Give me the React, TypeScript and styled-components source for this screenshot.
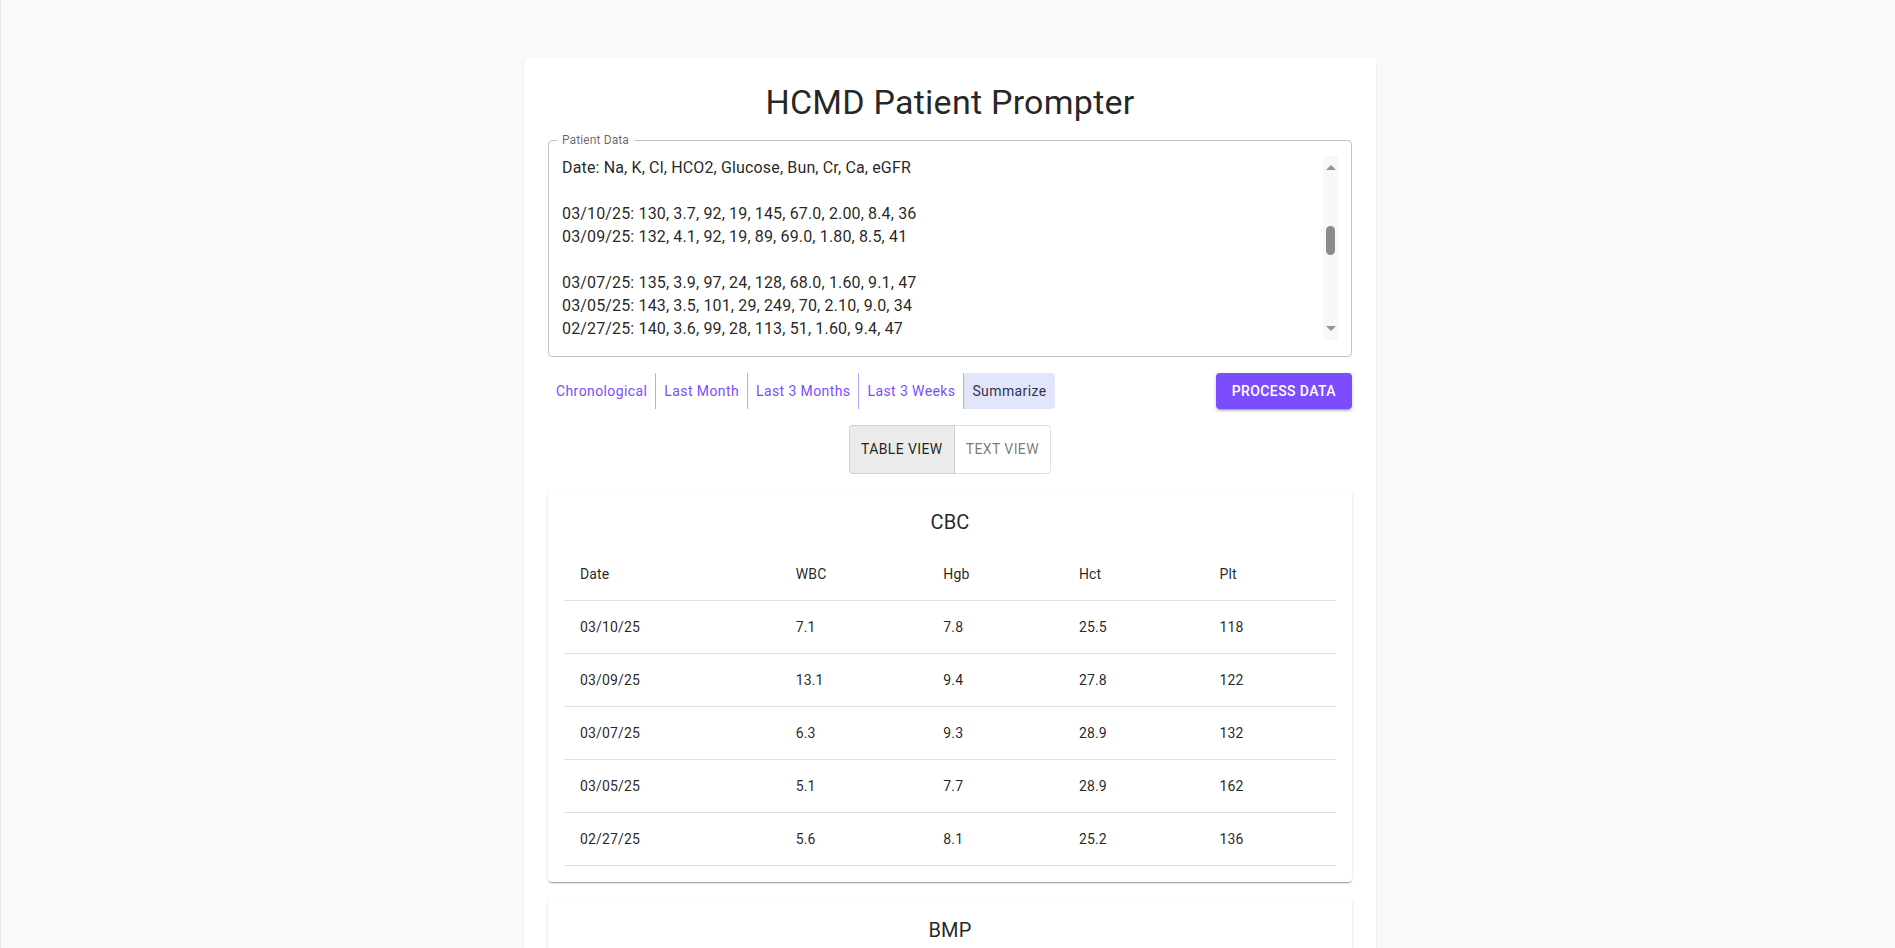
import React, { useLayoutEffect, useRef, useState } from "react";
import styled, { createGlobalStyle, css } from "styled-components";

const GlobalStyle = createGlobalStyle`
  html, body {
    margin: 0;
    padding: 0;
    background: #f8f9fb;
  }
  body {
    font-family: Roboto, "Noto Sans", "Liberation Sans", sans-serif;
    color: rgba(0, 0, 0, 0.87);
  }
  * { box-sizing: border-box; }
`;

const Page = styled.div`
  min-height: 100vh;
  border-left: 1px solid #e3e5e9;
  padding: 58px 0 32px 4px;
`;

const Container = styled.div`
  max-width: 900px;
  margin: 0 auto;
  padding: 0 24px;
`;

const MainCard = styled.div`
  background: #fff;
  border-radius: 4px;
  padding: 24px;
  box-shadow: 0 2px 1px -1px rgba(0, 0, 0, 0.12), 0 1px 1px 0 rgba(0, 0, 0, 0.08),
    0 1px 3px 0 rgba(0, 0, 0, 0.08);
`;

const Title = styled.h1`
  margin: 0 0 16px;
  font-size: 34px;
  font-weight: 400;
  line-height: 1.235;
  letter-spacing: 0.00735em;
  text-align: center;
  color: rgba(0, 0, 0, 0.87);
`;

const FieldBox = styled.div`
  position: relative;
  border: 1px solid rgba(0, 0, 0, 0.23);
  border-radius: 4px;
  padding: 15.5px 13px;
`;

const FieldLabel = styled.span`
  position: absolute;
  top: -7px;
  left: 8px;
  padding: 0 5px;
  background: #fff;
  font-size: 12px;
  line-height: 12px;
  letter-spacing: 0.00938em;
  color: rgba(0, 0, 0, 0.6);
`;

const DataArea = styled.textarea`
  display: block;
  width: 100%;
  height: 184px;
  margin: 0;
  padding: 0 16px 0 0;
  border: 0;
  outline: none;
  resize: none;
  background: transparent;
  font-family: Roboto, "Noto Sans", sans-serif;
  font-size: 16px;
  line-height: 23px;
  letter-spacing: 0.00938em;
  color: rgba(0, 0, 0, 0.87);
  scrollbar-width: none;
  &::-webkit-scrollbar {
    display: none;
  }
`;

const ScrollRail = styled.div`
  position: absolute;
  top: 15.5px;
  right: 13px;
  width: 15px;
  height: 184px;
  background: #f8f8f8;
  pointer-events: none;
`;

const RailArrow = styled.span<{ $dir: "up" | "down" }>`
  position: absolute;
  left: 2.5px;
  width: 0;
  height: 0;
  border-left: 5px solid transparent;
  border-right: 5px solid transparent;
  ${(p) =>
    p.$dir === "up"
      ? css`
          top: 9px;
          border-bottom: 5px solid #959595;
        `
      : css`
          bottom: 9px;
          border-top: 5px solid #959595;
        `}
`;

const RailThumb = styled.span`
  position: absolute;
  left: 3px;
  width: 9px;
  border-radius: 5px;
  background: #8a8a8a;
`;

const ActionRow = styled.div`
  display: flex;
  align-items: center;
  justify-content: space-between;
  margin-top: 16px;
`;

const FilterGroup = styled.div`
  display: inline-flex;
  border-radius: 4px;
`;

const FilterButton = styled.button<{ $active?: boolean }>`
  min-width: 64px;
  padding: 6px 8px;
  border: 0;
  border-right: 1px solid rgba(124, 77, 255, 0.5);
  background: transparent;
  font-family: Roboto, "Noto Sans", sans-serif;
  font-size: 14px;
  font-weight: 400;
  line-height: 1.75;
  letter-spacing: 0.02857em;
  color: #7c4dff;
  cursor: pointer;
  &:first-child {
    border-radius: 4px 0 0 4px;
  }
  &:last-child {
    border-right: 0;
    border-radius: 0 4px 4px 0;
  }
  ${(p) =>
    p.$active &&
    css`
      background: #e3e6fb;
      color: #2f3352;
    `}
`;

const ProcessButton = styled.button`
  padding: 6px 16px;
  border: 0;
  border-radius: 4px;
  background: #7c4dff;
  color: #fff;
  font-family: Roboto, "Noto Sans", sans-serif;
  font-size: 14px;
  font-weight: 500;
  line-height: 1.75;
  letter-spacing: 0.02857em;
  text-transform: uppercase;
  cursor: pointer;
  box-shadow: 0 3px 1px -2px rgba(0, 0, 0, 0.2), 0 2px 2px 0 rgba(0, 0, 0, 0.14),
    0 1px 5px 0 rgba(0, 0, 0, 0.12);
`;

const ViewRow = styled.div`
  display: flex;
  justify-content: center;
  margin-top: 16px;
`;

const ToggleGroup = styled.div`
  display: inline-flex;
  border-radius: 4px;
`;

const ToggleButton = styled.button<{ $selected?: boolean }>`
  padding: 11px;
  border: 1px solid rgba(0, 0, 0, 0.12);
  background: ${(p) => (p.$selected ? "rgba(0, 0, 0, 0.08)" : "transparent")};
  color: ${(p) => (p.$selected ? "rgba(0, 0, 0, 0.87)" : "rgba(0, 0, 0, 0.54)")};
  font-family: Roboto, "Noto Sans", sans-serif;
  font-size: 14px;
  font-weight: 400;
  line-height: 1.75;
  letter-spacing: 0.02857em;
  text-transform: uppercase;
  cursor: pointer;
  &:first-child {
    border-radius: 4px 0 0 4px;
  }
  &:last-child {
    margin-left: -1px;
    border-left-color: transparent;
    border-radius: 0 4px 4px 0;
  }
`;

const SectionCard = styled.section`
  margin-top: 16px;
  padding: 16px;
  background: #fff;
  border-radius: 4px;
  box-shadow: 0 2px 1px -1px rgba(0, 0, 0, 0.2), 0 1px 1px 0 rgba(0, 0, 0, 0.14),
    0 1px 3px 0 rgba(0, 0, 0, 0.12);
`;

const SectionTitle = styled.h2`
  margin: 0 0 10px;
  font-size: 20px;
  font-weight: 400;
  line-height: 1.6;
  letter-spacing: 0.0075em;
  text-align: center;
  color: rgba(0, 0, 0, 0.87);
`;

const LabTable = styled.table`
  width: 100%;
  border-collapse: collapse;
  table-layout: fixed;
`;

const Col = styled.col<{ $w?: string }>`
  width: ${(p) => p.$w || "auto"};
`;

const cellStyles = css`
  padding: 16px;
  text-align: left;
  font-size: 14px;
  line-height: 1.43;
  letter-spacing: 0.01071em;
  color: rgba(0, 0, 0, 0.87);
  border-bottom: 1px solid rgb(224, 224, 224);
`;

const HeadCell = styled.th`
  ${cellStyles};
  font-weight: 400;
`;

const Cell = styled.td`
  ${cellStyles};
  font-weight: 400;
`;

const rawData = [
  "Date: WBC, Hgb, Hct, Plt",
  "",
  "03/10/25: 7.1, 7.8, 25.5, 118",
  "03/09/25: 13.1, 9.4, 27.8, 122",
  "",
  "03/07/25: 6.3, 9.3, 28.9, 132",
  "03/05/25: 5.1, 7.7, 28.9, 162",
  "02/27/25: 5.6, 8.1, 25.2, 136",
  "",
  "Date: Mg, Phos",
  "",
  "03/10/25: 1.9, 4.2",
  "03/07/25: 2.0, 3.9",
  "03/05/25: 1.8, 4.4",
  "",
  "Date: Na, K, Cl, HCO2, Glucose, Bun, Cr, Ca, eGFR",
  "",
  "03/10/25: 130, 3.7, 92, 19, 145, 67.0, 2.00, 8.4, 36",
  "03/09/25: 132, 4.1, 92, 19, 89, 69.0, 1.80, 8.5, 41",
  "",
  "03/07/25: 135, 3.9, 97, 24, 128, 68.0, 1.60, 9.1, 47",
  "03/05/25: 143, 3.5, 101, 29, 249, 70, 2.10, 9.0, 34",
  "02/27/25: 140, 3.6, 99, 28, 113, 51, 1.60, 9.4, 47",
  "",
  "Date: AST, ALT, Alk Phos, T Bili, Albumin",
  "",
  "03/10/25: 32, 28, 110, 0.8, 3.1",
  "03/07/25: 30, 25, 104, 0.7, 3.2",
  "03/05/25: 41, 37, 118, 0.9, 3.0",
  "02/27/25: 29, 22, 99, 0.6, 3.4",
  "",
  "Date: PT, INR, PTT",
  "",
  "03/10/25: 13.8, 1.1, 31",
  "03/05/25: 14.2, 1.2, 33",
  "",
  "Date: Lactate, Procalcitonin",
  "",
  "03/09/25: 1.4, 0.12",
  "03/05/25: 2.1, 0.20",
  "",
  "",
].join("\n");

const cbcRows = [
  ["03/10/25", "7.1", "7.8", "25.5", "118"],
  ["03/09/25", "13.1", "9.4", "27.8", "122"],
  ["03/07/25", "6.3", "9.3", "28.9", "132"],
  ["03/05/25", "5.1", "7.7", "28.9", "162"],
  ["02/27/25", "5.6", "8.1", "25.2", "136"],
];

const bmpRows = [
  ["03/10/25", "130", "3.7", "92", "19", "145", "67.0", "2.00", "8.4", "36"],
  ["03/09/25", "132", "4.1", "92", "19", "89", "69.0", "1.80", "8.5", "41"],
  ["03/07/25", "135", "3.9", "97", "24", "128", "68.0", "1.60", "9.1", "47"],
  ["03/05/25", "143", "3.5", "101", "29", "249", "70", "2.10", "9.0", "34"],
  ["02/27/25", "140", "3.6", "99", "28", "113", "51", "1.60", "9.4", "47"],
];

const filters = ["Chronological", "Last Month", "Last 3 Months", "Last 3 Weeks", "Summarize"];

const ARROW_SPACE = 15;

export default function App() {
  const areaRef = useRef<HTMLTextAreaElement>(null);
  const [filter, setFilter] = useState("Summarize");
  const [view, setView] = useState<"table" | "text">("table");
  const [thumb, setThumb] = useState({ top: 70, height: 29 });

  const syncThumb = () => {
    const el = areaRef.current;
    if (!el) return;
    const track = el.clientHeight - ARROW_SPACE * 2;
    const ratio = el.clientHeight / Math.max(el.scrollHeight, 1);
    const height = Math.max(18, Math.round(track * ratio));
    const max = el.scrollHeight - el.clientHeight;
    const pos = max > 0 ? el.scrollTop / max : 0;
    setThumb({ top: ARROW_SPACE + Math.round(pos * (track - height)), height });
  };

  useLayoutEffect(() => {
    if (areaRef.current) areaRef.current.scrollTop = 15 * 23;
    syncThumb();
  }, []);

  return (
    <>
      <GlobalStyle />
      <Page>
        <Container>
          <MainCard>
            <Title>HCMD Patient Prompter</Title>
            <FieldBox>
              <FieldLabel>Patient Data</FieldLabel>
              <DataArea
                ref={areaRef}
                defaultValue={rawData}
                spellCheck={false}
                onScroll={syncThumb}
              />
              <ScrollRail>
                <RailArrow $dir="up" />
                <RailThumb style={{ top: thumb.top, height: thumb.height }} />
                <RailArrow $dir="down" />
              </ScrollRail>
            </FieldBox>
            <ActionRow>
              <FilterGroup>
                {filters.map((f) => (
                  <FilterButton key={f} $active={filter === f} onClick={() => setFilter(f)}>
                    {f}
                  </FilterButton>
                ))}
              </FilterGroup>
              <ProcessButton>Process Data</ProcessButton>
            </ActionRow>
            <ViewRow>
              <ToggleGroup>
                <ToggleButton $selected={view === "table"} onClick={() => setView("table")}>
                  Table View
                </ToggleButton>
                <ToggleButton $selected={view === "text"} onClick={() => setView("text")}>
                  Text View
                </ToggleButton>
              </ToggleGroup>
            </ViewRow>
            <SectionCard>
              <SectionTitle>CBC</SectionTitle>
              <LabTable>
                <colgroup>
                  <Col $w="27.94%" />
                  <Col $w="19.12%" />
                  <Col $w="17.58%" />
                  <Col $w="18.19%" />
                  <Col />
                </colgroup>
                <thead>
                  <tr>
                    {["Date", "WBC", "Hgb", "Hct", "Plt"].map((h) => (
                      <HeadCell key={h}>{h}</HeadCell>
                    ))}
                  </tr>
                </thead>
                <tbody>
                  {cbcRows.map((r) => (
                    <tr key={r[0]}>
                      {r.map((v, i) => (
                        <Cell key={i}>{v}</Cell>
                      ))}
                    </tr>
                  ))}
                </tbody>
              </LabTable>
            </SectionCard>
            <SectionCard>
              <SectionTitle>BMP</SectionTitle>
              <LabTable>
                <thead>
                  <tr>
                    {["Date", "Na", "K", "Cl", "HCO2", "Glucose", "Bun", "Cr", "Ca", "eGFR"].map((h) => (
                      <HeadCell key={h}>{h}</HeadCell>
                    ))}
                  </tr>
                </thead>
                <tbody>
                  {bmpRows.map((r) => (
                    <tr key={r[0]}>
                      {r.map((v, i) => (
                        <Cell key={i}>{v}</Cell>
                      ))}
                    </tr>
                  ))}
                </tbody>
              </LabTable>
            </SectionCard>
          </MainCard>
        </Container>
      </Page>
    </>
  );
}
